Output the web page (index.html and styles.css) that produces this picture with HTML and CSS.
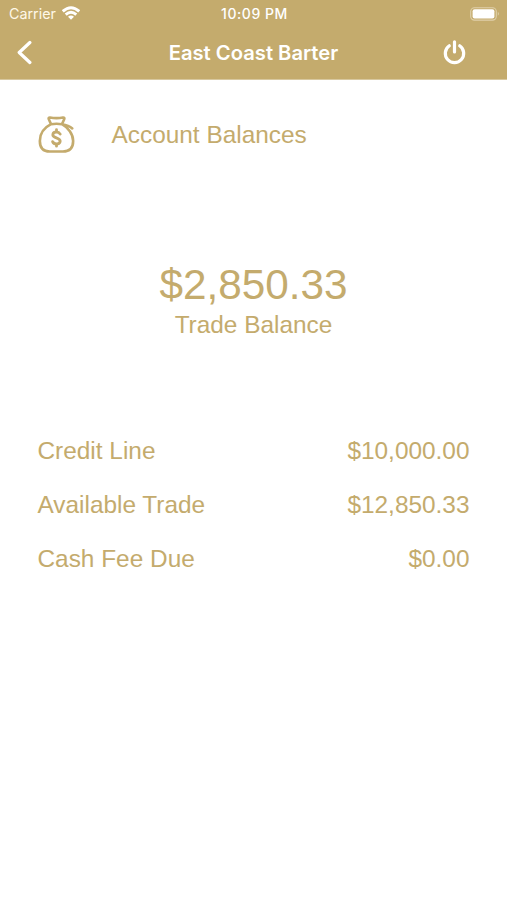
FILE: index.html
```html
<!DOCTYPE html>
<html lang="en">
<head>
<meta charset="utf-8">
<title>East Coast Barter</title>
<link rel="stylesheet" href="styles.css">
</head>
<body>
<header class="header">
  <div class="status">
    <div class="carrier">
      <span>Carrier</span>
      <svg class="wifi" width="18" height="14" viewBox="0 0 18 14" fill="none" stroke="currentColor" stroke-width="2.9">
        <path d="M.8 5.3Q9-1.9 17.2 5.3M3.7 8.6Q9 3.9 14.3 8.6"/>
        <path d="M6 10.7Q9 8.3 12 10.7L9 13.8Z" fill="currentColor" stroke="none"/>
      </svg>
    </div>
    <span class="time">10:09 PM</span>
    <svg class="battery" width="31" height="14" viewBox="0 0 31 14">
      <rect x="1.7" y=".7" width="25.6" height="12.4" rx="3.8" fill="none" stroke="#dfd0aa" stroke-width="1.1"/>
      <rect x="3.6" y="2.3" width="21.8" height="9.2" rx="2" fill="#fff"/>
      <path d="M28.8 4.8Q31 6.8 28.8 8.8Z" fill="#dfd0aa"/>
    </svg>
  </div>
  <nav class="nav">
    <svg class="back" width="16" height="26" viewBox="0 0 16 26" fill="none" stroke="currentColor" stroke-width="3.2" stroke-linecap="round" stroke-linejoin="round"><path d="M12.9 2.5L2.2 12.5L12.9 22.5"/></svg>
    <h1 class="title">East Coast Barter</h1>
    <svg class="power" width="24" height="26" viewBox="0 0 24 26" fill="none" stroke="currentColor" stroke-width="3.2" stroke-linecap="round"><path d="M11.5 1.8V12M6.3 5.8A9.2 9.2 0 1 0 16.7 5.8"/></svg>
  </nav>
</header>
<main class="content">
  <section class="heading">
    <svg class="bag" width="37" height="37" viewBox="0 0 38 38" fill="none" stroke="currentColor" stroke-width="2.7" stroke-linecap="round" stroke-linejoin="round">
      <path d="M13.4 8.4L11.1 3.3Q10.4 1.6 12.2 1.6Q19 2.8 25.8 1.6Q27.6 1.6 26.9 3.3L24.6 8.4Q19 7.4 13.4 8.4C7 11.6 1.9 17.8 1.9 25.6C1.9 33 6 36.4 12 36.4H25.6C32 36.4 36.1 32.8 36.1 25.6C36.1 18.4 30.9 11.8 24.6 8.4C28.6 9 32.2 10 35.2 12.8"/>
      <path d="M22.8 18.6Q21.5 16.4 19 16.4C14.6 16.4 14.2 20.4 17.2 21.7L20.8 23.3C24.2 25 22.8 28.7 19 28.7Q16 28.7 15 26.3M19 14V16.3M19 28.8V31" stroke-width="2.9"/>
    </svg>
    <h2 class="label">Account Balances</h2>
  </section>
  <section class="balance">
    <div class="amount">$2,850.33</div>
    <div class="caption">Trade Balance</div>
  </section>
  <section class="rows">
    <div class="row"><span>Credit Line</span><span>$10,000.00</span></div>
    <div class="row"><span>Available Trade</span><span>$12,850.33</span></div>
    <div class="row"><span>Cash Fee Due</span><span>$0.00</span></div>
  </section>
</main>
</body>
</html>
```
FILE: styles.css
```css
* { box-sizing: border-box; }
body { margin: 0; min-height: 900px; background: #fff; color: #c4ab6d; font-family: "Liberation Sans", Arial, sans-serif; font-size: 24.4px; }
h1, h2 { margin: 0; font-weight: 400; }
svg { display: block; flex: none; }
.header { height: 80px; background: #c4ab6d; color: #fff; font-family: Inter, sans-serif; border-bottom: 1px solid #d8c89f; }
.status { height: 27px; padding: 0 7px 0 9px; display: grid; grid-template-columns: 1fr auto 1fr; align-items: center; font-size: 13.5px; line-height: 27px; }
.carrier { display: flex; align-items: center; gap: 6px; color: #fff8e8; font-size: 14.3px; }
.wifi { color: #fff; margin-top: -1px; }
.time { font-weight: 500; font-size: 14px; letter-spacing: .55px; }
.battery { justify-self: end; }
.nav { height: 51px; padding: 0 17px; display: grid; grid-template-columns: 1fr auto 1fr; align-items: center; }
.title { font-size: 20.2px; line-height: 51px; font-weight: 600; }
.power { justify-self: end; margin-right: 23px; }
.content { padding: 35px 37.5px 0; }
.heading { height: 39px; display: flex; align-items: center; gap: 37px; }
.label { font-size: 24.4px; line-height: 39px; }
.balance { margin-top: 106px; text-align: center; }
.amount { font-size: 42.3px; line-height: 50px; }
.caption { line-height: 30px; }
.rows { margin-top: 84px; }
.row { height: 54px; display: flex; justify-content: space-between; align-items: center; line-height: 54px; }
```
